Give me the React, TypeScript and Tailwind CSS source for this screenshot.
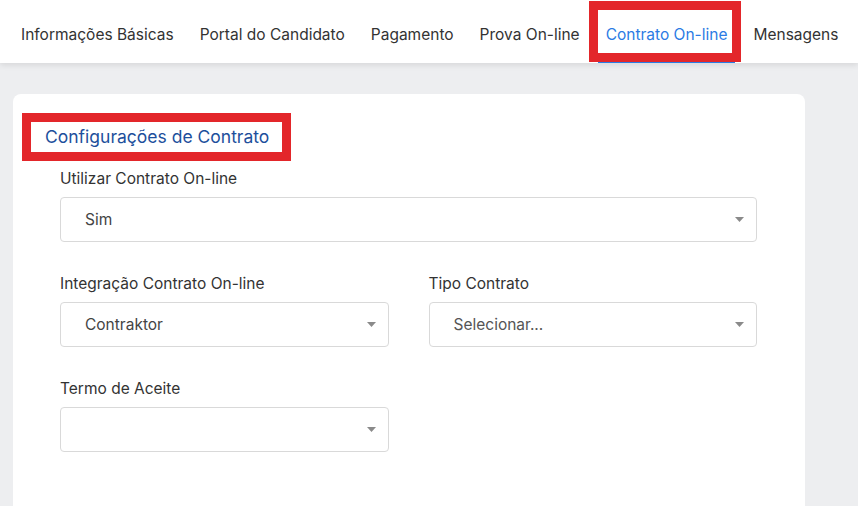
import React from 'react';

const tabs = [
  'Informações Básicas',
  'Portal do Candidato',
  'Pagamento',
  'Prova On-line',
  'Contrato On-line',
  'Mensagens',
];

const Arrow = () => (
  <svg width="9" height="5" viewBox="0 0 9 5" className="shrink-0">
    <path d="M0 0 L9 0 L4.5 5 Z" fill="#8a8a8a" />
  </svg>
);

const Select = ({ value, placeholder }: { value?: string; placeholder?: boolean }) => (
  <div className="h-[45px] flex items-center justify-between rounded-[4px] border border-[#d9d9d9] bg-white pl-[24px] pr-[12px]">
    <span className={placeholder ? 'text-[#555]' : 'text-[#444]'}>{value}</span>
    <Arrow />
  </div>
);

const Field = ({ label, value, placeholder }: { label: string; value?: string; placeholder?: boolean }) => (
  <div className="flex flex-col">
    <label className="h-[21px] leading-[21px] text-[#333] mb-[8px]">{label}</label>
    <Select value={value} placeholder={placeholder} />
  </div>
);

export default function App() {
  return (
    <div
      className="w-[858px] h-[506px] overflow-hidden bg-[#edeef0] text-[15.5px]"
      style={{ fontFamily: 'Inter, "Noto Sans", sans-serif' }}
    >
      <header className="relative z-10 h-[63px] bg-white flex items-stretch pl-[8px] shadow-[0_2px_6px_rgba(0,0,0,0.10)]">
        {tabs.map((t) => {
          const active = t === 'Contrato On-line';
          return (
            <div
              key={t}
              className={`relative flex items-center pt-[7px] px-[13px] whitespace-nowrap ${
                active ? 'text-[#2b7be4]' : 'text-[#333]'
              }`}
            >
              {t}
              {active && (
                <>
                  <span className="absolute left-[5px] right-[5px] bottom-0 h-[2px] bg-[#2b7be4]" />
                  <span className="absolute -left-[4px] -right-[1px] top-[1px] bottom-[1px] border-[9px] border-[#e3262a]" />
                </>
              )}
            </div>
          );
        })}
      </header>

      <div className="pl-[13px] pt-[31px]">
        <div className="w-[792px] h-[420px] rounded-[8px] bg-white pt-[19px] pl-[9px]">
          <div className="inline-block border-[9px] border-[#e3262a] pl-[14px] pr-[13px] h-[48px] leading-[30px] text-[17.5px] text-[#1d4f9c]">
            Configurações de Contrato
          </div>
          <div className="pl-[38px] pr-[48px] w-[783px] pt-[7px] flex flex-col gap-[31px]">
            <Field label="Utilizar Contrato On-line" value="Sim" />
            <div className="grid grid-cols-2 gap-[40px]">
              <Field label="Integração Contrato On-line" value="Contraktor" />
              <Field label="Tipo Contrato" value="Selecionar..." placeholder />
            </div>
            <div className="grid grid-cols-2 gap-[40px]">
              <Field label="Termo de Aceite" />
            </div>
          </div>
        </div>
      </div>
    </div>
  );
}
